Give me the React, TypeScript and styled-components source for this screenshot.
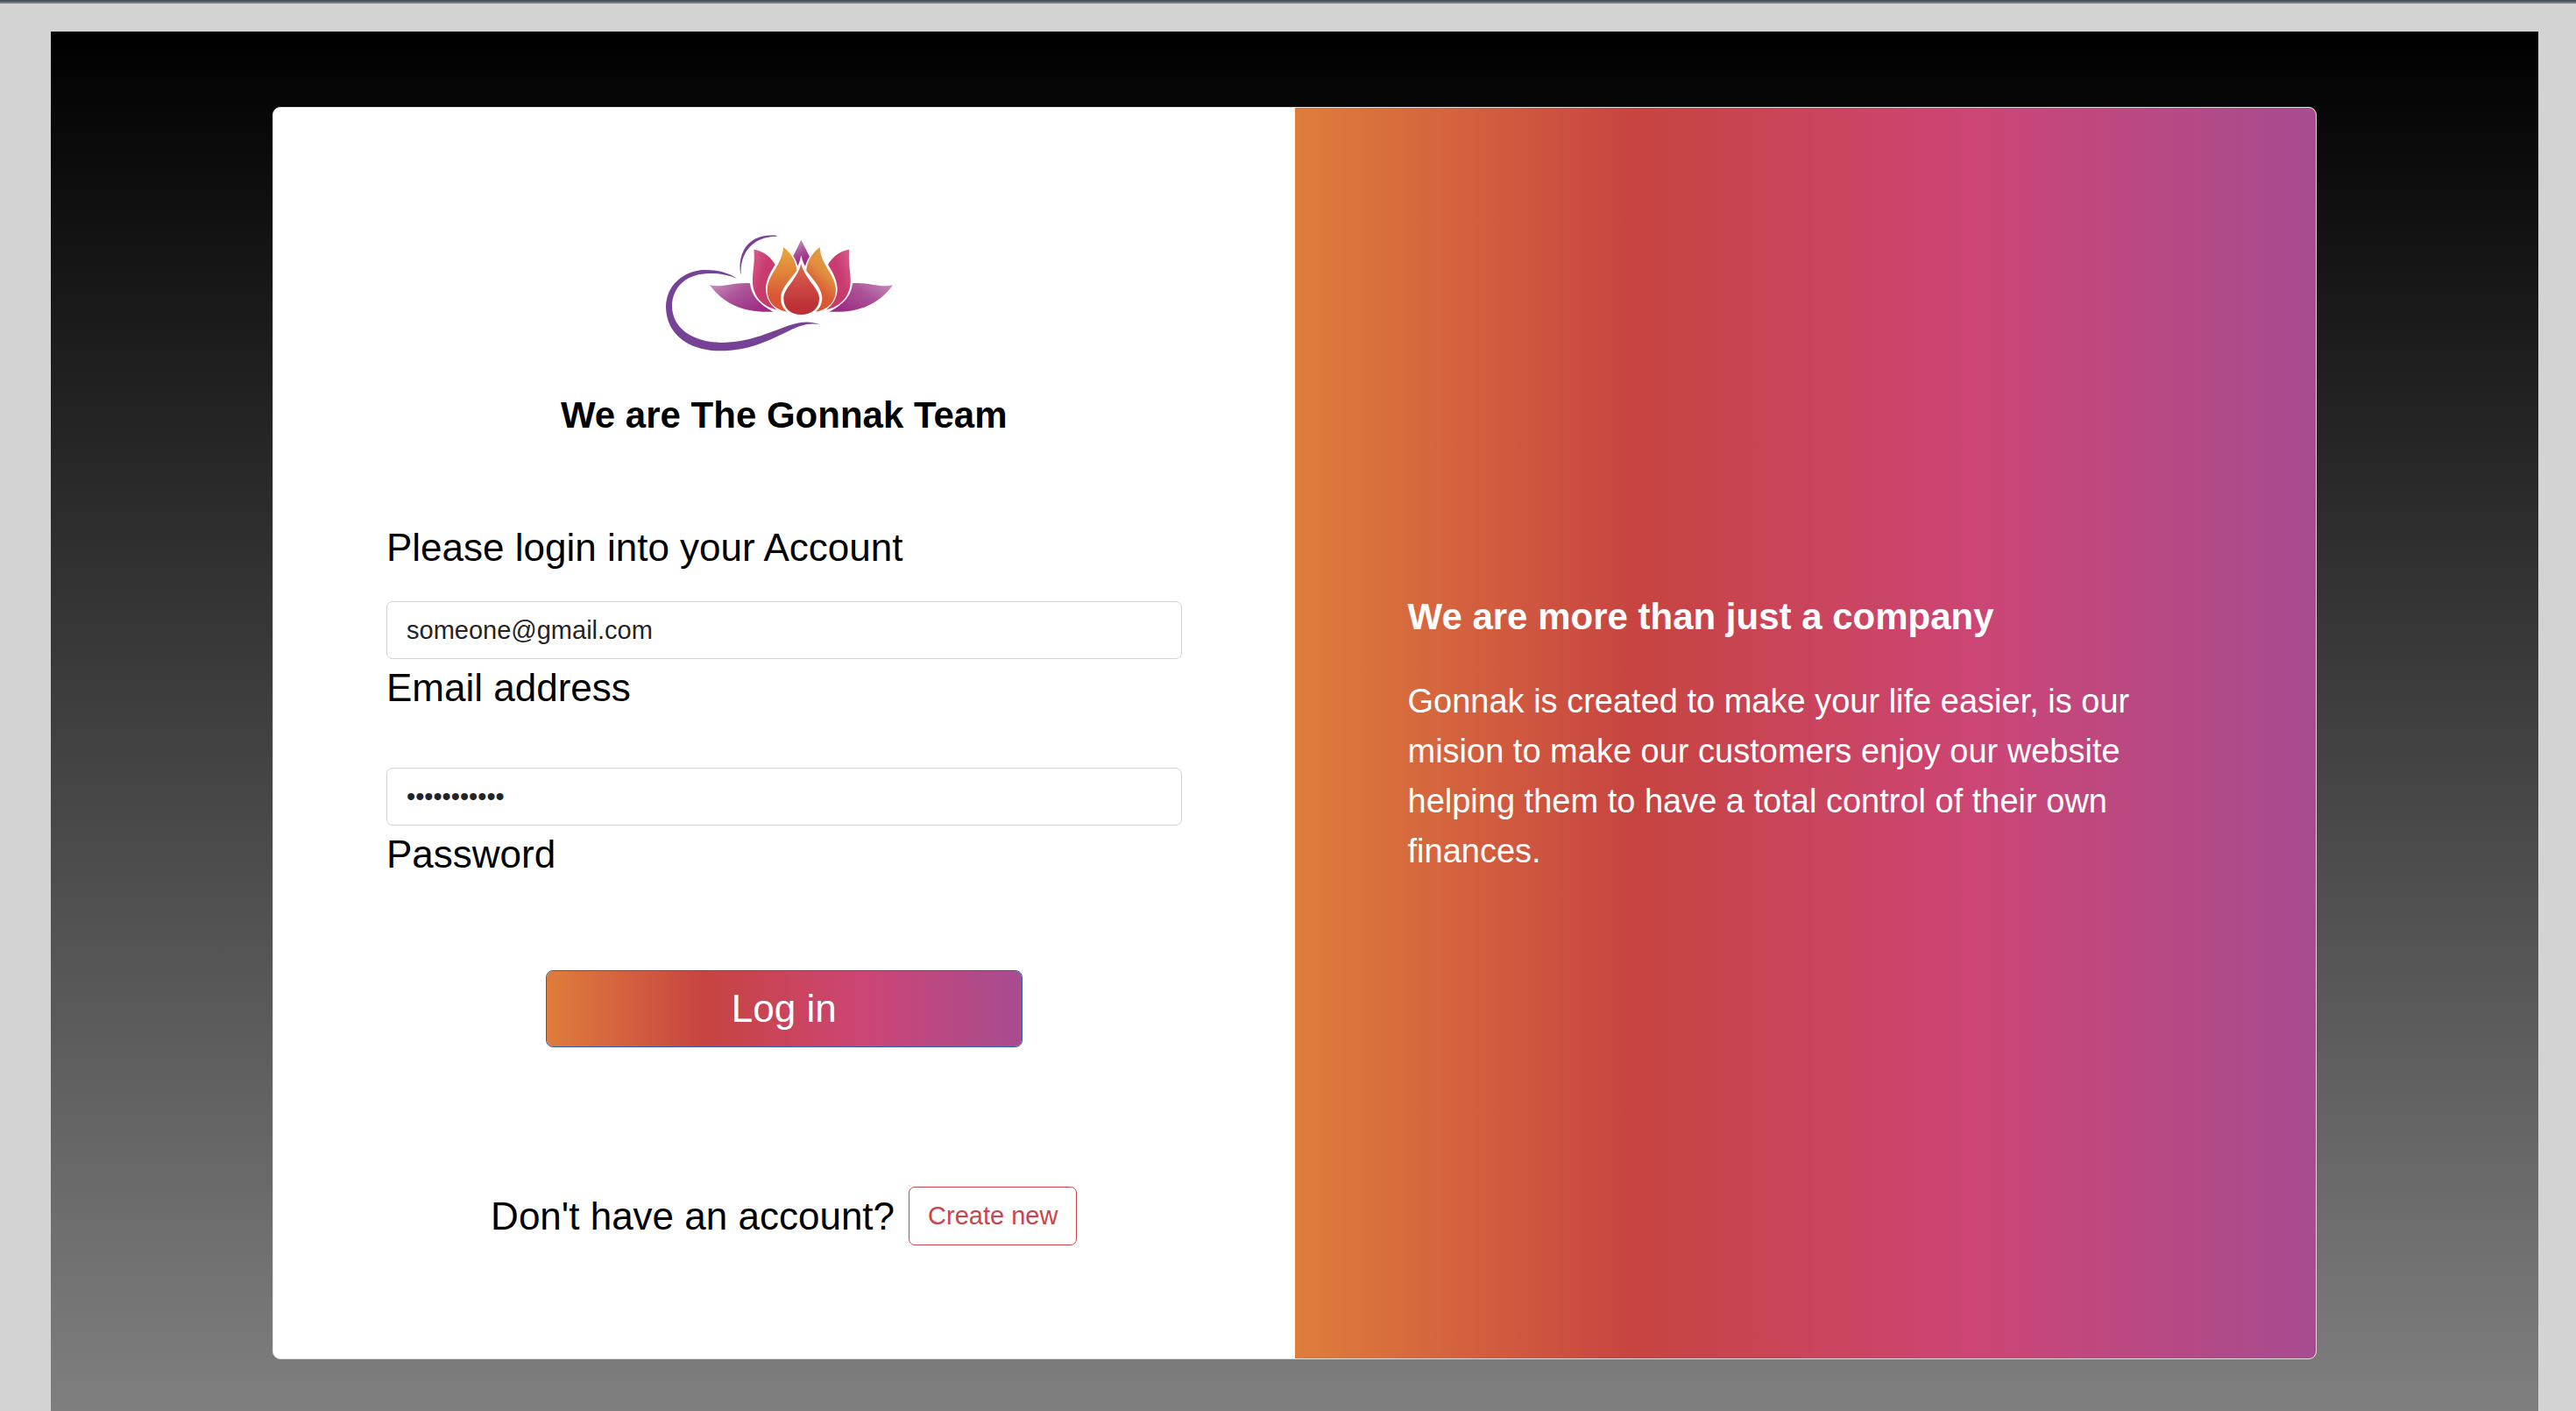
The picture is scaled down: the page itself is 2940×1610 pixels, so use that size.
import React from "react";
import styled, { createGlobalStyle } from "styled-components";

const brandGradient =
  "linear-gradient(to right, rgb(223,125,59), rgb(199,68,65), rgb(204,69,117), rgb(167,76,144))";

const GlobalStyle = createGlobalStyle`
  *, *::before, *::after { box-sizing: border-box; }
  body {
    margin: 0;
    background: #d3d3d3;
    color: #000;
    font-family: "Liberation Sans", Arial, Helvetica, sans-serif;
    font-size: 44px;
    line-height: 66px;
  }
`;

const Page = styled.div`
  display: flex;
  flex-direction: column;
  min-height: 100vh;
`;

const TopBar = styled.div`
  height: 4px;
  background: #4a505a;
  border-bottom: 2px solid #777c85;
`;

const Backdrop = styled.main`
  flex: 1;
  margin: 32px 43px 0 58px;
  padding: 86px 22px 60px;
  background: linear-gradient(to bottom, #000, #7f7f7f);
`;

const Card = styled.div`
  display: grid;
  grid-template-columns: 1fr 1fr;
  max-width: 2333px;
  margin: 0 auto;
  overflow: hidden;
  background: #fff;
  border: 1px solid #dfdfdf;
  border-radius: 9px;
`;

const FormPanel = styled.section`
  display: flex;
  flex-direction: column;
  padding: 129px;
`;

const Brand = styled.header`
  display: flex;
  flex-direction: column;
  align-items: center;
  gap: 36px;
  margin-bottom: 92px;
`;

const Logo = styled.svg`
  display: block;
  width: 300px;
  height: 160px;
`;

const Title = styled.h4`
  margin: 0;
  font-size: 42px;
  line-height: 52px;
  font-weight: 700;
`;

const LoginForm = styled.form`
  display: flex;
  flex-direction: column;
`;

const Prompt = styled.p`
  margin: 0 0 28px;
`;

const Field = styled.div`
  display: flex;
  flex-direction: column;
  margin-bottom: 58px;
`;

const TextInput = styled.input`
  width: 100%;
  height: 66px;
  padding: 0 22px;
  border: 1px solid #ced4da;
  border-radius: 7px;
  background: #fff;
  color: #212529;
  font-family: inherit;
  font-size: 29px;
`;

const LoginButton = styled.button`
  align-self: center;
  width: 60%;
  height: 88px;
  margin: 41px 0 159px;
  padding: 0;
  border: 1px solid #2f5fb0;
  border-radius: 8px;
  background: ${brandGradient} padding-box;
  color: #fff;
  font-family: inherit;
  font-size: 44px;
`;

const SignupRow = styled.div`
  display: flex;
  align-items: center;
  justify-content: center;
  gap: 16px;
`;

const SignupText = styled.p`
  margin: 0;
`;

const OutlineButton = styled.button`
  height: 67px;
  padding: 0 21px;
  border: 1px solid #cb444a;
  border-radius: 7px;
  background: transparent;
  color: #cb444a;
  font-family: inherit;
  font-size: 29px;
`;

const AboutPanel = styled.section`
  display: flex;
  flex-direction: column;
  justify-content: center;
  gap: 42px;
  padding: 133px 129px 129px;
  background: ${brandGradient};
  color: #fff;
`;

const AboutText = styled.p`
  margin: 0;
  font-size: 38px;
  line-height: 57px;
`;

function LotusLogo() {
  return (
    <Logo viewBox="15 6 900 480" role="img" aria-label="Gonnak">
      <defs>
        <linearGradient id="leafLeft" x1="0" y1="0" x2="1" y2="0.7">
          <stop offset="0" stopColor="#c98fbd" />
          <stop offset="0.45" stopColor="#ac5598" />
          <stop offset="1" stopColor="#9c2a83" />
        </linearGradient>
        <linearGradient id="leafRight" x1="1" y1="0" x2="0" y2="0.7">
          <stop offset="0" stopColor="#c98fbd" />
          <stop offset="0.45" stopColor="#ac5598" />
          <stop offset="1" stopColor="#9c2a83" />
        </linearGradient>
        <linearGradient id="pinkLeft" x1="0" y1="0.1" x2="0.8" y2="0.8">
          <stop offset="0" stopColor="#d65a8a" />
          <stop offset="0.5" stopColor="#ca3a70" />
          <stop offset="1" stopColor="#c63a6c" />
        </linearGradient>
        <linearGradient id="pinkRight" x1="1" y1="0.1" x2="0.2" y2="0.8">
          <stop offset="0" stopColor="#d65a8a" />
          <stop offset="0.5" stopColor="#ca3a70" />
          <stop offset="1" stopColor="#c63a6c" />
        </linearGradient>
        <linearGradient id="orangeLeft" x1="0.5" y1="0" x2="0.5" y2="1">
          <stop offset="0" stopColor="#e6a740" />
          <stop offset="0.4" stopColor="#e08438" />
          <stop offset="0.75" stopColor="#d95836" />
          <stop offset="1" stopColor="#d95334" />
        </linearGradient>
        <linearGradient id="orangeRight" x1="0.8" y1="0" x2="0.4" y2="1">
          <stop offset="0" stopColor="#e3a342" />
          <stop offset="0.4" stopColor="#e09040" />
          <stop offset="0.7" stopColor="#d95a35" />
          <stop offset="1" stopColor="#d95334" />
        </linearGradient>
        <linearGradient id="tip" x1="0.3" y1="0" x2="0.6" y2="1">
          <stop offset="0" stopColor="#c98fbd" />
          <stop offset="0.5" stopColor="#ab4b96" />
          <stop offset="1" stopColor="#97217e" />
        </linearGradient>
        <linearGradient id="core" x1="0.5" y1="0" x2="0.5" y2="1">
          <stop offset="0" stopColor="#d9684e" />
          <stop offset="0.45" stopColor="#cc4843" />
          <stop offset="0.85" stopColor="#bd3036" />
        </linearGradient>
      </defs>
      <path
        fill="#764296"
        d="M303 203C269 180 227 172 188 174C115 179 60 232 60 300C61 392 134 450 246 451C348 450 412 415 480 383C522 363 550 354 586 361C552 347 520 352 482 364C406 391 344 422 250 423C146 421 82 371 81 298C82 236 126 191 196 187C235 184 270 190 303 203Z"
      />
      <path
        fill="#764296"
        d="M316 188C304 119 339 47 439 56V59C355 60 314 117 317 188Z"
      />
      <path
        fill="url(#leafLeft)"
        d="M210 226C252 237 297 214 348 220C352 260 378 293 428 317C332 322 262 295 210 226Z"
      />
      <path
        fill="url(#leafRight)"
        d="M837 226C795 237 750 214 699 220C695 260 670 293 619 317C715 322 785 295 837 226Z"
      />
      <path
        fill="url(#pinkLeft)"
        d="M361 104C391 108 418 127 434 156C416 183 402 213 402 241C403 270 418 295 441 311C392 300 361 267 357 220C355 184 366 151 361 104Z"
      />
      <path
        fill="url(#pinkRight)"
        d="M688 104C658 108 631 127 615 156C633 183 647 213 647 241C646 270 631 295 608 311C657 300 688 267 692 220C694 184 683 151 688 104Z"
      />
      <path
        fill="url(#orangeLeft)"
        d="M462 96C491 118 506 145 508 177C480 213 454 239 453 270C453 288 460 304 474 317C431 309 407 282 407 242C408 191 459 156 462 96Z"
      />
      <path
        fill="url(#orangeRight)"
        d="M587 96C558 118 543 145 541 177C569 213 594 239 595 270C595 288 588 304 573 317C617 309 642 282 642 242C641 191 590 156 587 96Z"
      />
      <path
        fill="url(#tip)"
        d="M523 71L552 128C545 139 540 150 537 161C529 148 526 137 523 124C520 137 518 149 511 160C508 149 503 137 496 127Z"
      />
      <path
        fill="url(#core)"
        d="M523 153C530 181 546 201 561 222C577 243 585 256 585 272C585 306 558 327 523 327C488 327 463 306 463 272C463 256 470 243 486 222C501 201 516 181 523 153Z"
      />
    </Logo>
  );
}

export default function App() {
  return (
    <>
      <GlobalStyle />
      <Page>
        <TopBar />
        <Backdrop>
          <Card>
            <FormPanel>
              <Brand>
                <LotusLogo />
                <Title>We are The Gonnak Team</Title>
              </Brand>
              <LoginForm onSubmit={(e) => e.preventDefault()}>
                <Prompt>Please login into your Account</Prompt>
                <Field>
                  <TextInput
                    id="email"
                    type="email"
                    autoComplete="off"
                    defaultValue="someone@gmail.com"
                  />
                  <label htmlFor="email">Email address</label>
                </Field>
                <Field>
                  <TextInput
                    id="password"
                    type="password"
                    autoComplete="off"
                    defaultValue="password123"
                  />
                  <label htmlFor="password">Password</label>
                </Field>
                <LoginButton type="submit">Log in</LoginButton>
              </LoginForm>
              <SignupRow>
                <SignupText>Don't have an account?</SignupText>
                <OutlineButton type="button">Create new</OutlineButton>
              </SignupRow>
            </FormPanel>
            <AboutPanel>
              <Title>We are more than just a company</Title>
              <AboutText>
                Gonnak is created to make your life easier, is our mision to
                make our customers enjoy our website helping them to have a
                total control of their own finances.
              </AboutText>
            </AboutPanel>
          </Card>
        </Backdrop>
      </Page>
    </>
  );
}
